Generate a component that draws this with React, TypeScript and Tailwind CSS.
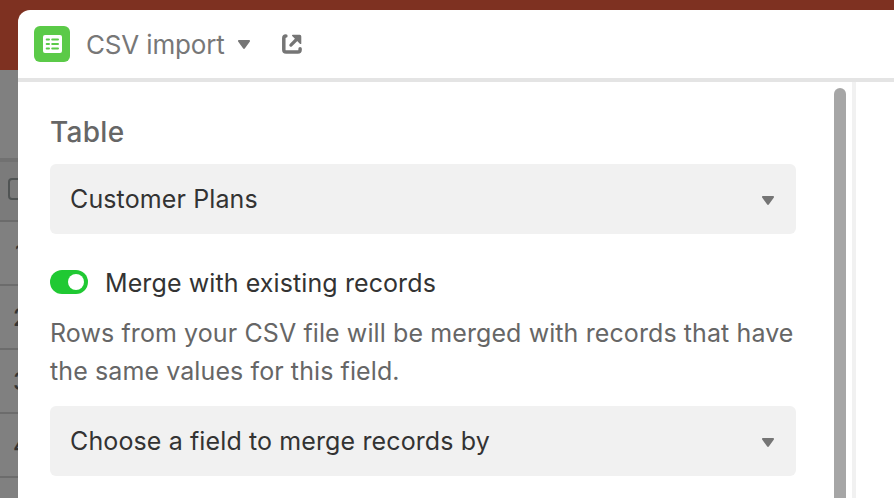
import React from 'react';

const ROW_NUMBERS = [
  { value: '1', indent: 'pl-[15px]' },
  { value: '2', indent: 'pl-[13px]' },
  { value: '3', indent: 'pl-[13px]' },
  { value: '4', indent: 'pl-[13px]' },
];

export default function App() {
  return (
    <div className="relative h-[498px] w-[894px] overflow-hidden bg-[#808080] font-['Inter','Liberation_Sans',sans-serif]">
      <GridBackdrop />
      <ImportDialog />
    </div>
  );
}

const GridBackdrop = () => {
  return (
    <div className="flex flex-col">
      <div className="h-[70px] bg-[#7e3121]" />
      <div className="h-[92px] border-b-4 border-[#717171]" />
      <div className="flex h-[60px] items-center border-b-2 border-[#6b6b6b] bg-[#7b7b7b] pb-1 pl-2">
        <div className="h-[22px] w-[22px] rounded-[4px] border-2 border-[#505454]" />
      </div>
      {ROW_NUMBERS.map(({ value, indent }) => (
        <div
          key={value}
          className={`h-16 border-b-2 border-[#6c6c6c] text-2xl leading-[64px] font-medium text-[#343434] ${indent}`}
        >
          {value}
        </div>
      ))}
    </div>
  );
};

const ImportDialog = () => {
  return (
    <div className="absolute top-[10px] left-[18px] flex h-[488px] w-[876px] flex-col rounded-tl-[12px] bg-white">
      <header className="flex h-[72px] shrink-0 items-center border-b-4 border-[#e4e4e4] pl-4">
        <div className="flex h-9 w-9 items-center justify-center rounded-[6px] bg-[#5bca48]">
          <TableIcon />
        </div>
        <span className="ml-4 w-[152px] pt-[2px] text-[26px] leading-[38px] tracking-[-0.15px] whitespace-nowrap text-[#777]">
          CSV import
        </span>
        <Caret />
        <ExternalLinkIcon />
      </header>
      <div className="flex min-h-0 flex-1">
        <div className="w-[816px] pl-8">
          <h2 className="mt-[31px] text-[28px] leading-[38px] font-medium tracking-[0.3px] text-[#666]">
            Table
          </h2>
          <SelectField className="mt-[13px]" label="Customer Plans" />
          <div className="mt-[29px] flex h-[38px] items-center">
            <div className="flex h-6 w-[38px] items-center justify-end rounded-full bg-[#20c933] pr-1">
              <div className="h-4 w-4 rounded-full bg-white" />
            </div>
            <span className="ml-[17px] pt-[3px] text-[25px] tracking-[0.1px] whitespace-nowrap text-[#333]">
              Merge with existing records
            </span>
          </div>
          <p className="mt-[13px] text-[25px] leading-[38px] tracking-[0.1px] whitespace-nowrap text-[#666]">
            Rows from your CSV file will be merged with records that have
            <br />
            the same values for this field.
          </p>
          <SelectField className="mt-4" label="Choose a field to merge records by" />
        </div>
        <div className="mt-[6px] w-3 rounded-t-full bg-[#a6a6a6]" />
        <div className="ml-[6px] w-1 bg-[#f1f1f1]" />
      </div>
    </div>
  );
};

const SelectField = ({ label, className }: { label: string; className: string }) => {
  return (
    <div
      className={`flex h-[70px] w-[746px] items-center justify-between rounded-[6px] bg-[#f1f1f1] pt-[3px] pr-[22px] pl-5 text-[25px] tracking-[0.12px] whitespace-nowrap text-[#333] ${className}`}
    >
      <span className="pb-[2px]">{label}</span>
      <Caret />
    </div>
  );
};

const Caret = () => {
  return (
    <svg className="shrink-0" width="12" height="9" viewBox="0 0 12 9" fill="#757575">
      <path d="M1 0h10c.9 0 1.3 1 .7 1.7L6.8 8.5c-.4.6-1.2.6-1.6 0L.3 1.7C-.3 1 .1 0 1 0z" />
    </svg>
  );
};

const TableIcon = () => {
  return (
    <svg width="19" height="18" viewBox="0 0 19 18" fill="none">
      <rect width="19" height="18" rx="2" fill="white" />
      <path
        d="M3.7 4.5h2.3M9.2 4.5h5.8M3.7 9h2.3M9.2 9h5.8M3.7 13.5h2.3M9.2 13.5h5.8"
        stroke="#5bca48"
        strokeWidth="2"
        strokeLinecap="round"
      />
    </svg>
  );
};

const ExternalLinkIcon = () => {
  return (
    <svg className="ml-8" width="20" height="20" viewBox="0 0 20 20" fill="none">
      <path
        d="M3.9 2C2.600 2 1.800 2.800 1.800 4.200v11.600c0 1.500.8 2.300 2.300 2.300h11.700c1.500 0 2.300-.8 2.300-2.300v-1"
        stroke="#757575"
        strokeWidth="3.500"
        strokeLinecap="round"
      />
      <path d="M8.900 11.100L14 6" stroke="#757575" strokeWidth="3.200" strokeLinecap="round" />
      <path
        d="M10.700 1.500h7c.6 0 .9.300.9.900v7z"
        fill="#757575"
        stroke="#757575"
        strokeWidth="1.400"
        strokeLinejoin="round"
      />
    </svg>
  );
};
